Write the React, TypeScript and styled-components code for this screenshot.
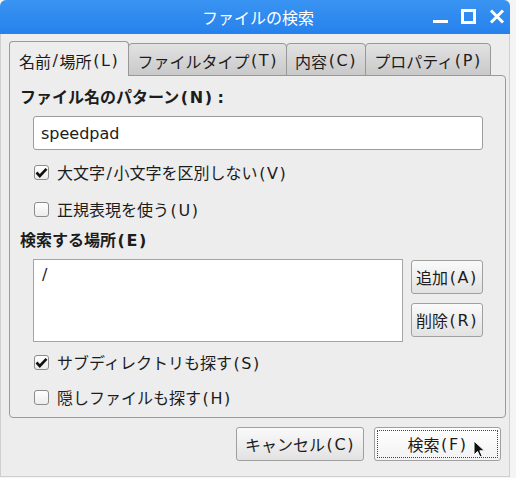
import styled, { createGlobalStyle } from "styled-components";

const GlobalStyle = createGlobalStyle`
  html, body {
    margin: 0;
    padding: 0;
    background: #f4f4f4;
  }
  body {
    font-family: "DejaVu Sans", "Noto Sans CJK JP", sans-serif;
    font-size: 16px;
    color: #1c1c1c;
  }
`;

const StyledWindow = styled.div`
  width: 510px;
  height: 477px;
  display: flex;
  flex-direction: column;
  box-sizing: border-box;
`;

const StyledTitleBar = styled.div`
  height: 34px;
  flex: none;
  display: flex;
  align-items: center;
  position: relative;
  background: linear-gradient(#3a94f2, #2681ec);
  border-radius: 6px 6px 0 0;
  color: #ffffff;
`;

const StyledTitle = styled.div`
  flex: 1;
  text-align: center;
  font-size: 16px;
  padding-left: 6px;
`;

const StyledTitleButtons = styled.div`
  position: absolute;
  right: 5px;
  top: 9px;
  display: flex;
  gap: 13px;
`;

const StyledBody = styled.div`
  flex: 1;
  display: flex;
  flex-direction: column;
  background: #ededed;
  border: 1px solid #cfcfcf;
  border-top: none;
  padding: 7px 3px 0 8px;
`;

const StyledTabRow = styled.div`
  display: flex;
  align-items: flex-end;
  height: 35px;
  margin-bottom: -1px;
  position: relative;
  z-index: 1;
`;

const StyledTab = styled.div<{ $active?: boolean }>`
  box-sizing: border-box;
  height: ${(p) => (p.$active ? "35px" : "33px")};
  padding: ${(p) => (p.$active ? "3px 9px 0 9px" : "2px 8px 0 8px")};
  display: flex;
  align-items: center;
  border: 1px solid ${(p) => (p.$active ? "#9a9a9a" : "#989898")};
  border-bottom: ${(p) => (p.$active ? "none" : "1px solid #989898")};
  border-radius: 4px 4px 0 0;
  background: ${(p) => (p.$active ? "#ededed" : "linear-gradient(#e2e2e2, #c9c9c9)")};
  margin-left: ${(p) => (p.$active ? "0" : "-1px")};
  white-space: nowrap;
`;

const StyledPanel = styled.div`
  border: 1px solid #9a9a9a;
  border-radius: 0 4px 4px 4px;
  padding: 11px 22px 0 10px;
  height: 343px;
  box-sizing: border-box;
  display: flex;
  flex-direction: column;
`;

const StyledHeading = styled.div<{ $top?: number }>`
  font-weight: bold;
  line-height: 22px;
  margin-top: ${(p) => p.$top ?? 0}px;
`;

// punctuation in the GTK labels is drawn half-width, a little wider than DejaVu
const StyledPunct = styled.span<{ $wide?: boolean }>`
  margin: 0 ${(p) => (p.$wide ? 4 : 1.6)}px;
`;

const StyledIndent = styled.div`
  padding-left: 13px;
`;

const StyledInput = styled.div`
  margin-top: 7px;
  height: 34px;
  box-sizing: border-box;
  border: 1px solid #9c9c9c;
  border-radius: 3px;
  background: #ffffff;
  display: flex;
  align-items: center;
  padding-left: 7px;
`;

const StyledCheckRow = styled.div<{ $top: number }>`
  display: flex;
  align-items: center;
  gap: 8px;
  margin-top: ${(p) => p.$top}px;
  height: 22px;
  padding-left: 1px;
`;

const StyledBox = styled.span`
  width: 15px;
  height: 15px;
  box-sizing: border-box;
  border: 1px solid #8c8c8c;
  border-radius: 3px;
  background: linear-gradient(#ffffff, #ececec);
  display: flex;
  align-items: center;
  justify-content: center;
`;

const StyledPlaceRow = styled.div`
  display: flex;
  gap: 8px;
  margin-top: 7px;
`;

const StyledTextArea = styled.div`
  width: 372px;
  height: 83px;
  box-sizing: border-box;
  border: 1px solid #a5a5a5;
  background: #ffffff;
  padding: 4px 0 0 8px;
  line-height: 22px;
`;

const StyledSideButtons = styled.div`
  display: flex;
  flex-direction: column;
  gap: 9px;
  padding-top: 1px;
`;

const StyledButton = styled.div<{ $width: number; $focus?: boolean }>`
  width: ${(p) => p.$width}px;
  height: 34px;
  box-sizing: border-box;
  border: 1px solid #a0a0a0;
  border-radius: 3px;
  background: linear-gradient(#fafafa, #e2e2e2);
  display: flex;
  align-items: center;
  justify-content: center;
  position: relative;
  white-space: nowrap;
  ${(p) =>
    p.$focus &&
    `
    background: linear-gradient(#ffffff, #f2f2f2);
    &::after {
      content: "";
      position: absolute;
      inset: 2px;
      border: 1px dotted #444;
      border-radius: 1px;
    }
  `}
`;

const StyledFooter = styled.div`
  display: flex;
  justify-content: flex-end;
  gap: 10px;
  padding: 9px 5px 0 0;
`;

const StyledCursor = styled.svg`
  position: absolute;
  left: 98px;
  top: 12px;
`;

function Txt({ text }: { text: string }) {
  return (
    <>
      {text.split(/([()/：])/).map((part, i) =>
        part === "(" || part === ")" || part === "/" ? (
          <StyledPunct key={i}>{part}</StyledPunct>
        ) : part === "：" ? (
          <StyledPunct key={i} $wide>:</StyledPunct>
        ) : (
          part
        )
      )}
    </>
  );
}

function CheckRow({ label, checked, top }: { label: string; checked?: boolean; top: number }) {
  return (
    <StyledCheckRow $top={top}>
      <StyledBox>
        {checked && (
          <svg width="13" height="11" viewBox="0 0 13 11">
            <path d="M1.5 5.5 L4.8 9 L11.5 1.8" fill="none" stroke="#111" strokeWidth="2.6" strokeLinejoin="miter" />
          </svg>
        )}
      </StyledBox>
      <span>
        <Txt text={label} />
      </span>
    </StyledCheckRow>
  );
}

export default function App() {
  return (
    <>
      <GlobalStyle />
      <StyledWindow>
        <StyledTitleBar>
          <StyledTitle>ファイルの検索</StyledTitle>
          <StyledTitleButtons>
            <svg width="15" height="16" viewBox="0 0 15 16">
              <rect x="0" y="11" width="15" height="3" fill="#fff" />
            </svg>
            <svg width="15" height="16" viewBox="0 0 15 16">
              <rect x="1.5" y="1.5" width="12" height="12" fill="none" stroke="#fff" strokeWidth="3" />
            </svg>
            <svg width="16" height="16" viewBox="0 0 16 16">
              <path d="M2 1.5 L14 13.5 M14 1.5 L2 13.5" stroke="#fff" strokeWidth="3" />
            </svg>
          </StyledTitleButtons>
        </StyledTitleBar>
        <StyledBody>
          <StyledTabRow>
            <StyledTab $active>
              <Txt text="名前/場所(L)" />
            </StyledTab>
            <StyledTab>
              <Txt text="ファイルタイプ(T)" />
            </StyledTab>
            <StyledTab>
              <Txt text="内容(C)" />
            </StyledTab>
            <StyledTab>
              <Txt text="プロパティ(P)" />
            </StyledTab>
          </StyledTabRow>
          <StyledPanel>
            <StyledHeading>
              <Txt text="ファイル名のパターン(N)：" />
            </StyledHeading>
            <StyledIndent>
              <StyledInput>speedpad</StyledInput>
              <CheckRow checked top={11} label="大文字/小文字を区別しない(V)" />
              <CheckRow top={15} label="正規表現を使う(U)" />
            </StyledIndent>
            <StyledHeading $top={10}>
              <Txt text="検索する場所(E)" />
            </StyledHeading>
            <StyledIndent>
              <StyledPlaceRow>
                <StyledTextArea>/</StyledTextArea>
                <StyledSideButtons>
                  <StyledButton $width={72}>
                    <Txt text="追加(A)" />
                  </StyledButton>
                  <StyledButton $width={72}>
                    <Txt text="削除(R)" />
                  </StyledButton>
                </StyledSideButtons>
              </StyledPlaceRow>
              <CheckRow checked top={9} label="サブディレクトリも探す(S)" />
              <CheckRow top={13} label="隠しファイルも探す(H)" />
            </StyledIndent>
          </StyledPanel>
          <StyledFooter>
            <StyledButton $width={128}>
              <Txt text="キャンセル(C)" />
            </StyledButton>
            <StyledButton $width={127} $focus>
              <Txt text="検索(F)" />
              <StyledCursor width="14" height="20" viewBox="0 0 14 20">
                <path d="M1 1 L1 15 L4.5 11.5 L7 17 L9.2 16 L6.8 10.8 L11.5 10.8 Z" fill="#111" stroke="#fff" strokeWidth="1" />
              </StyledCursor>
            </StyledButton>
          </StyledFooter>
        </StyledBody>
      </StyledWindow>
    </>
  );
}
